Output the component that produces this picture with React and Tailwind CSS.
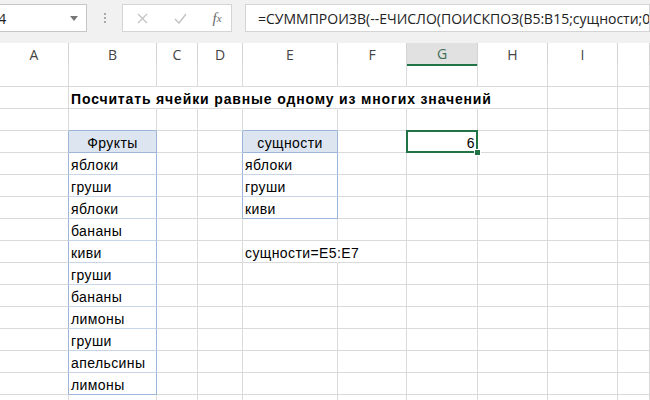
import React from "react";

const COLS = ["A", "B", "C", "D", "E", "F", "G", "H", "I", "J"];
const WIDTHS = [69, 88, 41, 45, 95, 69, 71, 70, 70, 32];

const GRID = "#dadada";
const BLUE = "#9db5d8";
const BLUE_IN = "#c8d5e9";

// cell contents by row number (1-based)
const data = {
  2: { B: { t: "Посчитать ячейки равные одному из многих значений", bold: true, spill: 6 } },
  4: { B: { t: "Фрукты", head: true }, E: { t: "сущности", head: true }, G: { t: "6", right: true, sel: true } },
  5: { B: { t: "яблоки" }, E: { t: "яблоки" } },
  6: { B: { t: "груши" }, E: { t: "груши" } },
  7: { B: { t: "яблоки" }, E: { t: "киви" } },
  8: { B: { t: "бананы" } },
  9: { B: { t: "киви" }, E: { t: "сущности=E5:E7", spill: 1 } },
  10: { B: { t: "груши" } },
  11: { B: { t: "бананы" } },
  12: { B: { t: "лимоны" } },
  13: { B: { t: "груши" } },
  14: { B: { t: "апельсины" } },
  15: { B: { t: "лимоны" } },
};

const inFruit = (r) => r >= 4 && r <= 15;
const inEnt = (r) => r >= 4 && r <= 7;

function borderRight(r, ci) {
  const col = COLS[ci];
  // text spilling over the next cells hides the gridline
  const row = data[r] || {};
  for (const k of Object.keys(row)) {
    const start = COLS.indexOf(k);
    const spill = row[k].spill || 0;
    if (ci >= start && ci < start + spill) return "transparent";
  }
  if (inFruit(r) && (col === "A" || col === "B")) return BLUE;
  if (inEnt(r) && (col === "D" || col === "E")) return BLUE;
  return GRID;
}

function borderBottom(r, ci) {
  const col = COLS[ci];
  if (col === "B" && (r === 3 || r === 4 || r === 15)) return BLUE;
  if (col === "E" && (r === 3 || r === 4 || r === 7)) return BLUE;
  if (col === "B" && inFruit(r)) return BLUE_IN;
  if (col === "E" && inEnt(r)) return BLUE_IN;
  return GRID;
}

function Cell({ r, ci }) {
  const cell = (data[r] || {})[COLS[ci]];
  const head = cell && cell.head;
  return (
    <div
      className={`relative h-[22px] border-r border-b flex items-center px-[2px] text-[14px] text-black ${
        head ? "bg-[#dde5f1] justify-center" : cell && cell.right ? "justify-end" : "justify-start"
      }`}
      style={{ borderRightColor: borderRight(r, ci), borderBottomColor: borderBottom(r, ci) }}
    >
      {cell && (
        <span className={`whitespace-nowrap pt-[3px] ${cell.bold ? "font-bold tracking-[0.85px]" : "tracking-[0.4px]"}`}>
          {cell.t}
        </span>
      )}
      {cell && cell.sel && (
        <>
          <div className="absolute z-10 -left-[1px] -top-[1px] -right-[1px] -bottom-[1px] border-2 border-[#217346] pointer-events-none" />
          <div className="absolute z-20 -right-[4px] -bottom-[4px] w-[7px] h-[7px] bg-[#217346] border border-white" />
        </>
      )}
    </div>
  );
}

function FormulaBar() {
  return (
    <div className="h-[43px] bg-[#f1f1f1] flex items-start pt-[4px]" style={{ fontFamily: "'Open Sans', 'Noto Sans', sans-serif" }}>
      <div className="-ml-[20px] w-[107px] h-[28px] bg-white border border-[#c6c6c6] flex items-center justify-between pl-[7px] pr-[8px] text-[14px] text-[#222]">
        <span>G4</span>
        <svg width="8" height="5" viewBox="0 0 8 5">
          <path d="M0 0 L8 0 L4 5 Z" fill="#777" />
        </svg>
      </div>
      <div className="w-[35px] h-[28px] flex flex-col items-center justify-center gap-[2px]">
        <span className="w-[2px] h-[2px] bg-[#a8a8a8]" />
        <span className="w-[2px] h-[2px] bg-[#a8a8a8]" />
        <span className="w-[2px] h-[2px] bg-[#a8a8a8]" />
      </div>
      <div className="w-[110px] h-[28px] bg-white border border-[#d4d4d4] flex items-center">
        <div className="w-[38px] flex justify-center">
          <svg width="11" height="11" viewBox="0 0 11 11">
            <path d="M1 1 L10 10 M10 1 L1 10" stroke="#c4c4c4" strokeWidth="1.4" />
          </svg>
        </div>
        <div className="w-[38px] flex justify-center">
          <svg width="13" height="11" viewBox="0 0 13 11">
            <path d="M1 6 L5 10 L12 1" stroke="#c4c4c4" strokeWidth="1.5" fill="none" />
          </svg>
        </div>
        <div className="flex-1 flex justify-center pl-[4px] text-[#6a6a6a] text-[15px] italic" style={{ fontFamily: "'Liberation Serif', serif" }}>
          f<span className="text-[11px] mt-[3px]">x</span>
        </div>
      </div>
      <div className="ml-[13px] flex-1 h-[28px] bg-white border border-[#d4d4d4] flex items-center pl-[12px] text-[14px] text-[#222] whitespace-nowrap overflow-hidden">
        =СУММПРОИЗВ(--ЕЧИСЛО(ПОИСКПОЗ(B5:B15;сущности;0))*1)
      </div>
    </div>
  );
}

export default function App() {
  const template = WIDTHS.map((w) => `${w}px`).join(" ");
  const rows = Array.from({ length: 16 }, (_, i) => i + 1);
  return (
    <div className="w-[650px] h-[400px] overflow-hidden bg-white">
      <FormulaBar />
      <div
        className="grid h-[22px] border-b border-[#b5b5b5] text-[14px] text-[#444]"
        style={{ gridTemplateColumns: template, fontFamily: "'Open Sans', 'Noto Sans', sans-serif" }}
      >
        {COLS.map((c) => (
          <div
            key={c}
            className={`flex items-center justify-center border-r border-[#d4d4d4] ${
              c === "G" ? "bg-[#e1e1e1] text-[#3f6e55] border-b-2 border-b-[#217346]" : "bg-white"
            }`}
          >
            {c !== "J" ? c : ""}
          </div>
        ))}
      </div>
      <div className="grid" style={{ gridTemplateColumns: template, fontFamily: "'Liberation Sans', Arial, sans-serif" }}>
        {rows.map((r) => COLS.map((c, ci) => <Cell key={`${r}-${c}`} r={r} ci={ci} />))}
      </div>
    </div>
  );
}
